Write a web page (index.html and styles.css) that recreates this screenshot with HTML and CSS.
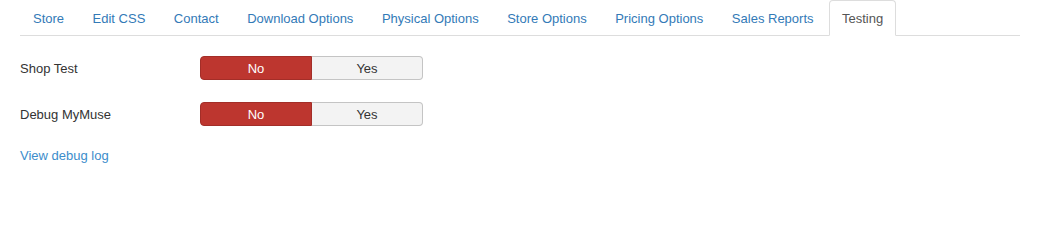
FILE: index.html
```html
<!DOCTYPE html>
<html>
<head>
<meta charset="utf-8">
<link rel="stylesheet" href="styles.css">
</head>
<body>
<div class="page">
  <ul class="tabs">
    <li><a href="#">Store</a></li>
    <li><a href="#">Edit CSS</a></li>
    <li><a href="#">Contact</a></li>
    <li><a href="#">Download Options</a></li>
    <li><a href="#">Physical Options</a></li>
    <li><a href="#">Store Options</a></li>
    <li><a href="#">Pricing Options</a></li>
    <li><a href="#">Sales Reports</a></li>
    <li class="active"><a href="#">Testing</a></li>
  </ul>
  <div class="content">
    <div class="row">
      <div class="label">Shop Test</div>
      <div class="toggle"><span class="opt no">No</span><span class="opt yes">Yes</span></div>
    </div>
    <div class="row">
      <div class="label">Debug MyMuse</div>
      <div class="toggle"><span class="opt no">No</span><span class="opt yes">Yes</span></div>
    </div>
    <a class="log" href="#">View debug log</a>
  </div>
</div>
</body>
</html>
```

FILE: styles.css
```css
html, body {
  margin: 0;
  padding: 0;
  background: #fff;
  font-family: "Liberation Sans", Arial, sans-serif;
  font-size: 13px;
  line-height: 18px;
  color: #333;
}
.page {
  padding: 0 20px;
}
.tabs {
  list-style: none;
  margin: 0;
  padding: 0;
  display: flex;
  border-bottom: 1px solid #ddd;
}
.tabs li {
  margin-right: 2.5px;
  margin-bottom: -1px;
}
.tabs a {
  display: block;
  padding: 9px 12px 7px;
  line-height: 18px;
  border: 1px solid transparent;
  border-radius: 4px 4px 0 0;
  color: #337ab7;
  text-decoration: none;
}
.tabs li.active a {
  color: #555;
  background: #fff;
  border-color: #ddd #ddd transparent #ddd;
}
.content {
  padding-top: 20px;
}
.row {
  display: flex;
  align-items: center;
  height: 24px;
  margin-bottom: 22px;
}
.label {
  width: 180px;
  padding-top: 2px;
  color: #333;
}
.toggle {
  display: flex;
  width: 223px;
  height: 24px;
}
.opt {
  flex: 1;
  display: flex;
  align-items: center;
  justify-content: center;
  box-sizing: border-box;
  height: 24px;
  padding-top: 1px;
}
.opt.no {
  background: #bd362f;
  color: #fff;
  border: 1px solid #a32e28;
  border-radius: 4px 0 0 4px;
}
.opt.yes {
  background: #f3f3f3;
  color: #333;
  border: 1px solid #c4c4c4;
  border-left: none;
  border-radius: 0 4px 4px 0;
}
.log {
  display: block;
  margin-top: -1px;
  color: #3c8dcb;
  text-decoration: none;
}
```
